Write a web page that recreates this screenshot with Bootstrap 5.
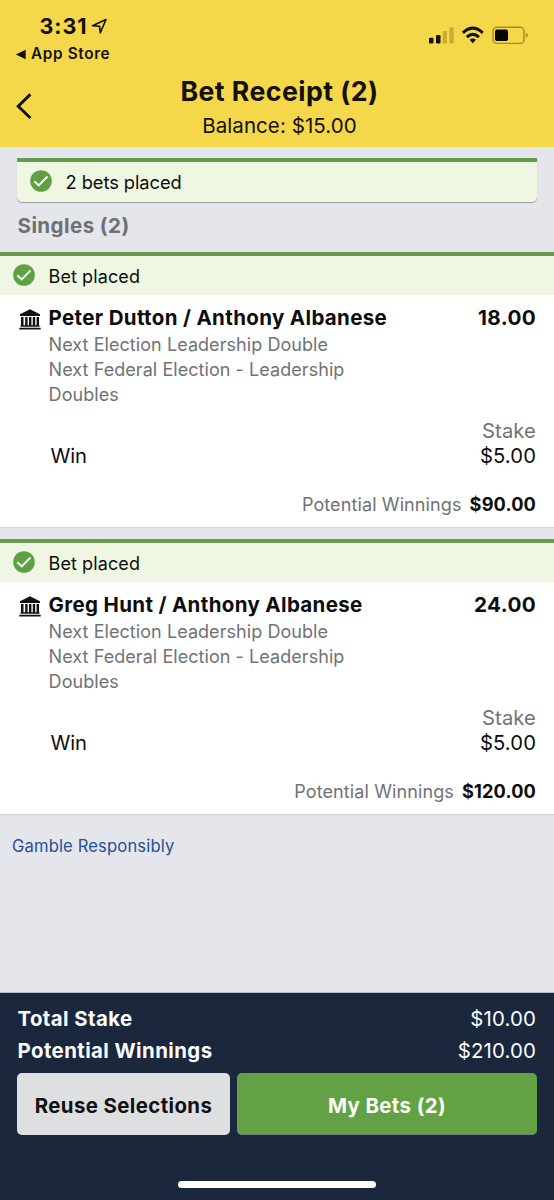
<!DOCTYPE html>
<html lang="en">
<head>
<meta charset="utf-8">
<meta name="viewport" content="width=device-width, initial-scale=1">
<title>Bet Receipt</title>
<link href="https://cdn.jsdelivr.net/npm/bootstrap@5.3.0/dist/css/bootstrap.min.css" rel="stylesheet">
<style>
  body { font-family: Inter, "Liberation Sans", sans-serif; background: #e5e6eb; color: #0d0d0d; font-size: 18px; line-height: 26px; overflow: hidden; }
  .screen { height: 1200px; }
  .semi { font-weight: 700; }
  .topbar { background: #f4d849; height: 147px; padding: 13px 26px 0 15px; color: #130f02; }
  .status-row { height: 52px; }
  .clock { font-size: 21.5px; letter-spacing: .9px; line-height: 26px; padding-left: 24.6px; }
  .back-app { font-size: 15.3px; font-weight: 600; letter-spacing: .65px; line-height: 28px; padding-top: 1px; }
  .signals { padding-top: 12px; }
  .title-row { display: grid; grid-template-columns: 30px 1fr 24px; margin-right: -10px; }
  .page-title { font-size: 26.7px; letter-spacing: .45px; line-height: 34px; padding-top: 8.5px; }
  .balance { font-size: 20.5px; letter-spacing: .07px; line-height: 34px; padding-top: 1px; }
  .summary { margin: 11px 17px 0; height: 44px; border-top: 4px solid #659c4c; background: #eff7e2; border-radius: 0 0 5px 5px; box-shadow: 0 1px 1px #999fa0; padding: 0 0 0 13px; }
  .summary span { font-size: 18.3px; letter-spacing: -.06px; margin-left: 13.5px; }
  .section-title { font-size: 20.6px; letter-spacing: .4px; color: #6e7076; line-height: 32px; margin: 8px 0 0 17.5px; height: 42px; }
  .bet { height: 275px; margin-bottom: 12px; background: #fff; box-shadow: 0 1px 1px #d5d4de; }
  .bet-head { height: 43px; border-top: 4px solid #659c4c; background: #eff7e2; padding: 0 0 0 13px; }
  .bet-head span { font-size: 18px; letter-spacing: .1px; margin-left: 13.5px; padding-top: 2px; }
  .bet-body { padding: 10px 18px 0 48px; }
  .bet-title { font-size: 20.5px; letter-spacing: .35px; }
  .bank { margin-left: -29px; margin-right: 7.5px; margin-top: 2px; }
  .odds { font-size: 20.7px; letter-spacing: .35px; }
  .desc { color: #707276; letter-spacing: .06px; line-height: 25.4px; width: 320px; padding: .6px 0 0 .6px; }
  .muted { color: #707276; }
  .stakes { font-size: 20.2px; letter-spacing: .12px; line-height: 25px; margin-top: 10.2px; }
  .win { padding-left: 2.5px; letter-spacing: -.1px; }
  .winnings { margin-top: 23.2px; letter-spacing: .11px; line-height: 26px; }
  .winnings .semi { margin-left: 8px; font-size: 18.2px; letter-spacing: .15px; }
  .responsible { color: #265097; font-size: 16.6px; letter-spacing: .14px; margin: 7px 0 0 12px; }
  .slip { height: 207px; background: #1a273d; padding: 10px 18px 0 17.5px; color: #fbfcff; box-shadow: 0 -1px 0 #b9bdca; }
  .slip-line { font-size: 20.4px; letter-spacing: .42px; line-height: 32px; }
  .slip-line .amount { letter-spacing: .15px; }
  .actions { gap: 7px; margin: 6px -1px 0 -.5px; }
  .actions .btn { height: 62px; border: 0; border-radius: 5px; font-size: 20.4px; font-weight: 700; letter-spacing: .4px; padding: 4px 0 0; }
  .btn-reuse { width: 213px; background: #dedfe1; color: #111; }
  .btn-bets { background: #62a144; color: #fbfff5; box-shadow: inset 0 -1px 0 #658075; }
  .home-line { width: 198px; height: 7px; background: #fff; margin-top: 46px; }
</style>
</head>
<body>
<svg class="d-none">
  <symbol id="tick" viewBox="0 0 22 22"><circle cx="11" cy="11" r="10.8" fill="#5fa045"/><path d="M4.3 11.3 8.7 15.4 17.5 6.5" fill="none" stroke="#f4faec" stroke-width="2"/></symbol>
  <symbol id="bank" viewBox="0 0 22 21"><path d="M11 .2 21 5.2V7H1V5.2ZM2 8h2.5v9H2ZM6.2 8h2.4v9H6.2ZM10 8h2.4v9H10ZM13.8 8h2.4v9h-2.4ZM17.6 8H20v9h-2.4ZM1.5 16.3h19v1.5h-19ZM.3 18.7h21.4v1.9H.3Z" fill="#111"/></symbol>
</svg>
<main class="screen d-flex flex-column">
  <header class="topbar flex-shrink-0">
    <div class="status-row d-flex justify-content-between">
      <div>
        <div class="clock semi d-flex align-items-center">3:31
          <svg width="17" height="17" viewBox="0 0 17 17" class="ms-1"><path d="M1.5 7.8 15 1.5 9.3 14.8 8.5 8.2Z" fill="none" stroke="#130f02" stroke-width="1.6" stroke-linejoin="round"/></svg>
        </div>
        <div class="back-app d-flex align-items-center"><svg width="12" height="11" viewBox="0 0 12 11" class="me-1"><path d="M.8 5.5 10.7.7v9.6Z" fill="#130f02"/></svg>App Store</div>
      </div>
      <div class="signals d-flex align-items-start">
        <svg width="102" height="20" viewBox="426 25 102 20">
          <g fill="#130f02"><rect x="429" y="37.7" width="4.5" height="5.8" rx="1.2"/><rect x="436" y="35" width="4.5" height="8.5" rx="1.2"/></g>
          <g fill="#c8ad35"><rect x="442.7" y="31" width="4.3" height="12.5" rx="1"/><rect x="449.4" y="27.2" width="4.3" height="16.3" rx="1"/></g>
          <g fill="none" stroke="#130f02" stroke-width="3"><path d="M462.9 32.9Q472.8 23.5 482.8 32.9"/><path d="M466.8 37.2Q472.8 31.4 478.9 37.2"/></g>
          <path d="M469.6 39.8Q472.8 37.2 476 39.8L472.8 43.3Z" fill="#130f02"/>
          <rect x="493" y="27.2" width="31" height="16.2" rx="4" fill="none" stroke="#a08c2a" stroke-width="1.4"/>
          <rect x="495" y="29.6" width="13" height="11.4" rx="1.8" fill="#080600"/><path d="M525.8 32.8Q527.7 33.4 527.7 35.2T525.8 37.7Z" fill="#a08c2a"/>
        </svg>
      </div>
    </div>
    <div class="title-row">
      <svg width="20" height="28" viewBox="0 0 20 28" style="margin-top:27px"><path d="M15.4 2.4 3.2 14.2 15.4 26" fill="none" stroke="#130f02" stroke-width="2.9"/></svg>
      <div class="text-center">
        <h1 class="page-title semi m-0">Bet Receipt (2)</h1>
        <div class="balance">Balance: $15.00</div>
      </div>
    </div>
  </header>

  <section class="summary d-flex align-items-center flex-shrink-0"><svg width="22" height="22" style="margin-top:-2px"><use href="#tick"/></svg><span>2 bets placed</span></section>
  <h2 class="section-title semi mb-0">Singles (2)</h2>

  <article class="bet flex-shrink-0">
    <div class="bet-head d-flex align-items-center"><svg width="22" height="22" style="margin-top:-2px"><use href="#tick"/></svg><span>Bet placed</span></div>
    <div class="bet-body">
      <div class="d-flex justify-content-between">
        <div class="bet-title semi d-flex align-items-center"><svg class="bank" width="22" height="21"><use href="#bank"/></svg>Peter Dutton / Anthony Albanese</div>
        <div class="odds semi">18.00</div>
      </div>
      <div class="desc">Next Election Leadership Double<br>Next Federal Election - Leadership<br>Doubles</div>
      <div class="stakes"><div class="muted text-end">Stake</div>
        <div class="d-flex justify-content-between"><span class="win">Win</span><span>$5.00</span></div></div>
      <div class="winnings text-end"><span class="muted">Potential Winnings</span><span class="semi">$90.00</span></div>
    </div>
  </article>

  <article class="bet flex-shrink-0">
    <div class="bet-head d-flex align-items-center"><svg width="22" height="22" style="margin-top:-2px"><use href="#tick"/></svg><span>Bet placed</span></div>
    <div class="bet-body">
      <div class="d-flex justify-content-between">
        <div class="bet-title semi d-flex align-items-center"><svg class="bank" width="22" height="21"><use href="#bank"/></svg>Greg Hunt / Anthony Albanese</div>
        <div class="odds semi">24.00</div>
      </div>
      <div class="desc">Next Election Leadership Double<br>Next Federal Election - Leadership<br>Doubles</div>
      <div class="stakes"><div class="muted text-end">Stake</div>
        <div class="d-flex justify-content-between"><span class="win">Win</span><span>$5.00</span></div></div>
      <div class="winnings text-end"><span class="muted">Potential Winnings</span><span class="semi">$120.00</span></div>
    </div>
  </article>

  <div class="responsible">Gamble Responsibly</div>

  <footer class="slip mt-auto flex-shrink-0">
    <div class="slip-line d-flex justify-content-between"><span class="semi">Total Stake</span><span class="amount">$10.00</span></div>
    <div class="slip-line d-flex justify-content-between"><span class="semi">Potential Winnings</span><span class="amount">$210.00</span></div>
    <div class="actions d-flex">
      <button type="button" class="btn btn-reuse">Reuse Selections</button>
      <button type="button" class="btn btn-bets flex-grow-1">My Bets (2)</button>
    </div>
    <div class="home-line rounded-pill mx-auto"></div>
  </footer>
</main>
<script src="https://cdn.jsdelivr.net/npm/bootstrap@5.3.0/dist/js/bootstrap.bundle.min.js"></script>
</body>
</html>
